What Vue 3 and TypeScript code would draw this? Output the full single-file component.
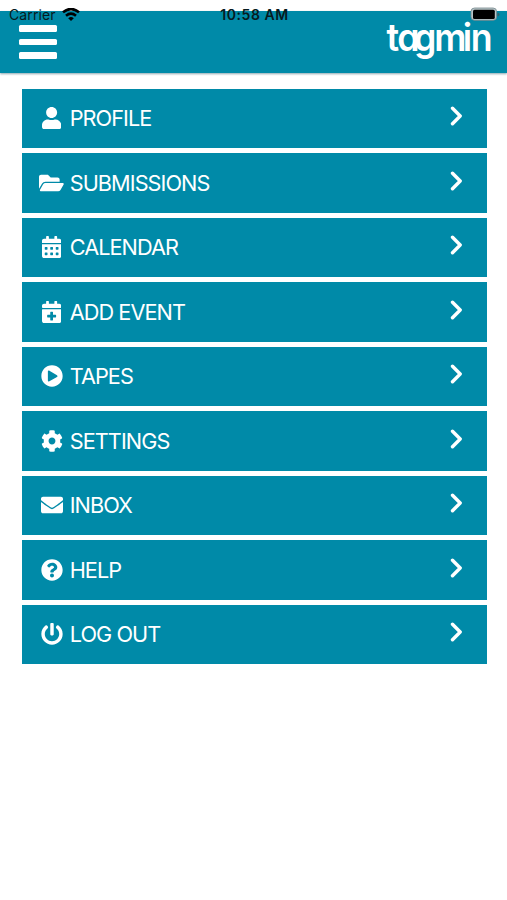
<script setup lang="ts">
interface MenuItem {
  label: string
  width: number
  path: string
}

const items: MenuItem[] = [
  { label: 'PROFILE', width: 448, path: 'M224 256c70.700 0 128-57.300 128-128S294.700 0 224 0 96 57.300 96 128s57.300 128 128 128zm89.600 32h-16.700c-22.200 10.200-46.900 16-72.900 16s-50.600-5.800-72.900-16h-16.700C60.200 288 0 348.200 0 422.400V464c0 26.500 21.500 48 48 48h352c26.500 0 48-21.500 48-48v-41.600c0-74.200-60.200-134.400-134.400-134.400z' },
  { label: 'SUBMISSIONS', width: 576, path: 'M572.694 292.093L500.270 416.248A63.997 63.997 0 0 1 444.989 448H45.025c-18.523 0-30.064-20.093-20.731-36.093l72.424-124.155A64 64 0 0 1 152 256h399.964c18.523 0 30.064 20.093 20.730 36.093zM152 224h328v-48c0-26.510-21.490-48-48-48H272l-64-64H48C21.490 64 0 85.490 0 112v278.046l69.077-118.418C86.214 242.250 117.989 224 152 224z' },
  { label: 'CALENDAR', width: 448, path: 'M0 464c0 26.500 21.500 48 48 48h352c26.500 0 48-21.500 48-48V192H0v272zm320-196c0-6.600 5.400-12 12-12h40c6.600 0 12 5.400 12 12v40c0 6.600-5.400 12-12 12h-40c-6.600 0-12-5.400-12-12v-40zm0 128c0-6.600 5.400-12 12-12h40c6.600 0 12 5.400 12 12v40c0 6.600-5.400 12-12 12h-40c-6.600 0-12-5.400-12-12v-40zM192 268c0-6.600 5.400-12 12-12h40c6.600 0 12 5.400 12 12v40c0 6.600-5.400 12-12 12h-40c-6.600 0-12-5.400-12-12v-40zm0 128c0-6.600 5.400-12 12-12h40c6.600 0 12 5.400 12 12v40c0 6.600-5.400 12-12 12h-40c-6.600 0-12-5.400-12-12v-40zM64 268c0-6.600 5.400-12 12-12h40c6.600 0 12 5.400 12 12v40c0 6.600-5.400 12-12 12H76c-6.600 0-12-5.400-12-12v-40zm0 128c0-6.600 5.400-12 12-12h40c6.600 0 12 5.400 12 12v40c0 6.600-5.400 12-12 12H76c-6.600 0-12-5.400-12-12v-40zM400 64h-48V16c0-8.800-7.200-16-16-16h-32c-8.800 0-16 7.200-16 16v48H160V16c0-8.800-7.200-16-16-16h-32c-8.800 0-16 7.200-16 16v48H48C21.500 64 0 85.500 0 112v48h448v-48c0-26.500-21.500-48-48-48z' },
  { label: 'ADD EVENT', width: 448, path: 'M436 160H12c-6.600 0-12-5.400-12-12v-36c0-26.500 21.500-48 48-48h48V12c0-6.600 5.400-12 12-12h40c6.600 0 12 5.400 12 12v52h128V12c0-6.600 5.400-12 12-12h40c6.600 0 12 5.400 12 12v52h48c26.500 0 48 21.500 48 48v36c0 6.600-5.400 12-12 12zM12 192h424c6.600 0 12 5.400 12 12v260c0 26.500-21.500 48-48 48H48c-26.500 0-48-21.500-48-48V204c0-6.600 5.400-12 12-12zm316 140c0-6.600-5.400-12-12-12h-60v-60c0-6.600-5.400-12-12-12h-40c-6.600 0-12 5.400-12 12v60h-60c-6.600 0-12 5.400-12 12v40c0 6.600 5.400 12 12 12h60v60c0 6.600 5.400 12 12 12h40c6.600 0 12-5.400 12-12v-60h60c6.600 0 12-5.400 12-12v-40z' },
  { label: 'TAPES', width: 512, path: 'M256 8C119 8 8 119 8 256s111 248 248 248 248-111 248-248S393 8 256 8zm115.700 272l-176 101c-15.800 8.800-35.700-2.500-35.700-21V152c0-18.400 19.800-29.800 35.700-21l176 107c16.400 9.200 16.400 32.900 0 42z' },
  { label: 'SETTINGS', width: 512, path: 'M487.400 315.700l-42.600-24.600c4.300-23.200 4.300-47 0-70.200l42.600-24.600c4.900-2.800 7.100-8.600 5.500-14-11.100-35.600-30-67.800-54.700-94.600-3.800-4.100-10-5.100-14.800-2.300L380.800 110c-17.900-15.400-38.500-27.300-60.800-35.100V25.800c0-5.600-3.900-10.500-9.400-11.700-36.700-8.200-74.300-7.800-109.200 0-5.500 1.200-9.400 6.100-9.400 11.700V75c-22.200 7.900-42.800 19.800-60.800 35.100L88.700 85.500c-4.900-2.800-11-1.900-14.800 2.300-24.700 26.700-43.600 58.900-54.700 94.600-1.700 5.400.6 11.200 5.500 14L67.300 221c-4.300 23.200-4.300 47 0 70.200l-42.600 24.600c-4.900 2.800-7.100 8.600-5.500 14 11.100 35.600 30 67.800 54.700 94.600 3.800 4.100 10 5.100 14.800 2.300l42.600-24.600c17.900 15.400 38.500 27.300 60.800 35.100v49.200c0 5.600 3.900 10.500 9.400 11.700 36.700 8.200 74.300 7.800 109.200 0 5.500-1.200 9.400-6.100 9.400-11.700v-49.200c22.200-7.900 42.800-19.800 60.800-35.100l42.600 24.600c4.900 2.800 11 1.900 14.800-2.300 24.700-26.700 43.600-58.900 54.700-94.600 1.500-5.500-.7-11.300-5.600-14.100zM256 336c-44.100 0-80-35.900-80-80s35.900-80 80-80 80 35.900 80 80-35.900 80-80 80z' },
  { label: 'INBOX', width: 512, path: 'M502.300 190.800c3.900-3.100 9.700-.2 9.700 4.700V400c0 26.500-21.500 48-48 48H48c-26.500 0-48-21.500-48-48V195.600c0-5 5.700-7.800 9.700-4.700 22.400 17.400 52.100 39.500 154.100 113.600 21.100 15.400 56.700 47.800 92.200 47.600 35.700.3 72-32.800 92.300-47.600 102-74.100 131.600-96.300 154-113.700zM256 320c23.200.4 56.600-29.200 73.400-41.400 132.700-96.300 142.800-104.700 173.400-128.700 5.800-4.500 9.200-11.500 9.200-18.900v-19c0-26.500-21.500-48-48-48H48c-26.500 0-48 21.500-48 48v19c0 7.400 3.400 14.300 9.200 18.900 30.600 23.900 40.700 32.400 173.400 128.700 16.800 12.200 50.200 41.800 73.400 41.400z' },
  { label: 'HELP', width: 512, path: 'M504 256c0 136.997-111.043 248-248 248S8 392.997 8 256C8 119.083 119.043 8 256 8s248 111.083 248 248zM262.655 90c-54.497 0-89.255 22.957-116.549 63.758-3.536 5.286-2.353 12.415 2.715 16.258l34.699 26.310c5.205 3.947 12.621 3.008 16.665-2.122 17.864-22.658 30.113-35.797 57.303-35.797 20.429 0 45.698 13.148 45.698 32.958 0 14.976-12.363 22.667-32.534 33.976C247.128 238.528 216 254.941 216 296v4c0 6.627 5.373 12 12 12h56c6.627 0 12-5.373 12-12v-1.333c0-28.462 83.186-29.647 83.186-106.667 0-58.002-60.165-102-116.531-102zM256 338c-25.365 0-46 20.635-46 46 0 25.364 20.635 46 46 46s46-20.636 46-46c0-25.365-20.635-46-46-46z' },
  { label: 'LOG OUT', width: 512, path: 'M400 54.100c63 45 104 118.600 104 201.900 0 136.800-110.800 247.700-247.500 248C120 504.300 8.200 393 8 256.400 7.900 173.100 48.900 99.300 111.800 54.200c11.700-8.300 28-4.800 35 7.700L162.600 90c5.900 10.500 3.100 23.800-6.600 31-41.500 30.800-68 79.600-68 134.900-.1 92.300 74.500 168.100 168 168.100 91.600 0 168.600-74.200 168-169.100-.3-51.800-24.700-101.800-68.100-134-9.700-7.200-12.400-20.500-6.500-30.900l15.800-28.100c7-12.400 23.200-16.100 34.800-7.800zM296 264V24c0-13.300-10.700-24-24-24h-32c-13.300 0-24 10.700-24 24v240c0 13.300 10.700 24 24 24h32c13.300 0 24-10.700 24-24z' },
]
</script>

<template>
  <div class="screen">
    <header class="header">
      <button class="burger" aria-label="Menu"><i /><i /><i /></button>
      <svg class="logo" viewBox="0 0 108 54" role="img">
        <text transform="scale(0.94 1)" x="-0.500 10.800 28.700 50.200 80.500 89" y="32.500">tagmin</text>
      </svg>
    </header>
    <div class="status">
      <div class="carrier">
        <span>Carrier</span>
        <svg width="18" height="14" viewBox="0 0 18 14" fill="none" stroke="#000" stroke-width="2.700">
          <path d="M1 4.300Q9-2.200 17 4.300M4 7.700Q9 3.700 14 7.700" />
          <path d="M9 13L6.200 10.200Q9 7.800 11.800 10.200Z" fill="#000" stroke="none" />
        </svg>
      </div>
      <span class="time">10:58 AM</span>
      <svg class="battery" width="30" height="14" viewBox="0 0 30 14">
        <rect x="1" y="0" width="25.600" height="12.300" rx="3.500" fill="#b9c6c9" stroke="#75878b" stroke-width="0.800" />
        <rect x="3" y="1.700" width="21.800" height="9.300" rx="1.500" fill="#000" />
        <path d="M27.500 4.500v4q2-.5 2-2t-2-2z" fill="#38606a" />
      </svg>
    </div>
    <nav class="menu">
      <a v-for="item in items" :key="item.label" class="row">
        <span class="icon">
          <svg :viewBox="`0 0 ${item.width} 512`"><path :d="item.path" /></svg>
        </span>
        <span class="label">{{ item.label }}</span>
        <svg class="chevron" viewBox="0 0 14 20"><path d="M2.500 2.300L10.200 10 2.500 17.700" /></svg>
      </a>
    </nav>
  </div>
</template>

<style>
body {
  margin: 0;
  background: #fff;
}
</style>

<style scoped>
.screen {
  position: relative;
  box-sizing: border-box;
  height: 900px;
  padding-top: 11px;
  overflow: hidden;
  font-family: Inter, "Liberation Sans", sans-serif;
}
.header {
  display: flex;
  justify-content: space-between;
  align-items: flex-start;
  box-sizing: border-box;
  height: 62px;
  padding: 7px 12px 0 19px;
  background: #008aa8;
  box-shadow: 0 1px 2px rgba(0, 60, 80, 0.45);
}
.burger {
  display: flex;
  flex-direction: column;
  gap: 7px;
  margin: 7px 0 0;
  padding: 0;
  border: 0;
  background: none;
}
.burger i {
  width: 38px;
  height: 6.500px;
  border-radius: 1.500px;
  background: #fff;
}
.logo {
  width: 108px;
  height: 54px;
  overflow: visible;
  fill: #fff;
  font-size: 38px;
  font-weight: 600;
  font-feature-settings: "cv11";
}
.status {
  position: absolute;
  top: 6px;
  left: 0;
  display: grid;
  grid-template-columns: 1fr auto 1fr;
  align-items: center;
  box-sizing: border-box;
  width: 100%;
  height: 15px;
  padding: 0 7px 0 9px;
  font-size: 14px;
  color: #061a20;
}
.carrier {
  display: flex;
  align-items: center;
  gap: 6px;
  letter-spacing: 0.100px;
}
.time {
  font-weight: 600;
  letter-spacing: 0.550px;
}
.battery {
  justify-self: end;
  overflow: visible;
}
.menu {
  display: flex;
  flex-direction: column;
  gap: 5px;
  padding: 15.500px 20.500px 0 21.700px;
}
.row {
  display: flex;
  align-items: center;
  box-sizing: border-box;
  height: 59.500px;
  padding: 0 22.500px 0 16px;
  background: #008aa8;
  color: #fff;
}
.icon {
  display: flex;
  justify-content: center;
  width: 28px;
}
.icon svg {
  height: 22px;
  fill: #fff;
}
.label {
  flex: 1;
  margin-left: 4px;
  font-size: 21.700px;
  letter-spacing: -0.940px;
}
.chevron {
  width: 14px;
  height: 20px;
  margin-top: -4px;
  fill: none;
  stroke: #fff;
  stroke-width: 3.400;
  stroke-linecap: round;
  stroke-linejoin: round;
}
</style>
